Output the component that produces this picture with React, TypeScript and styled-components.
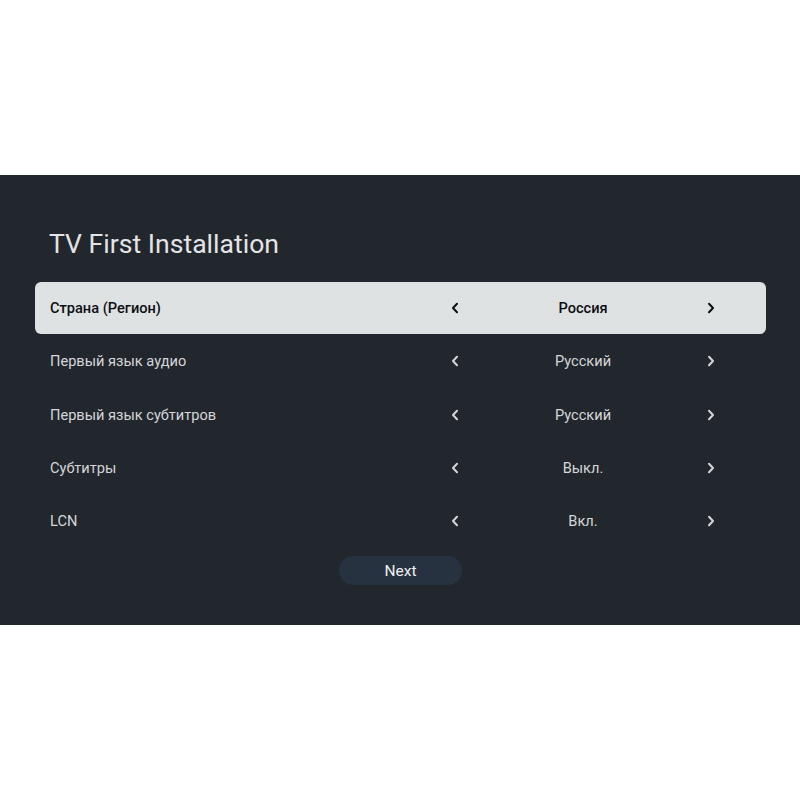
import { createGlobalStyle } from "styled-components";
import styled from "styled-components";

const GlobalStyle = createGlobalStyle`
  html, body {
    margin: 0;
    padding: 0;
    background: #ffffff;
  }
  body {
    font-family: Roboto, "Noto Sans", sans-serif;
  }
`;

const Page = styled.div`
  width: 800px;
  height: 800px;
  display: flex;
  align-items: center;
`;

const Panel = styled.div`
  width: 800px;
  height: 450px;
  box-sizing: border-box;
  background: #22262d;
  padding: 53px 34px 0 35px;
  display: flex;
  flex-direction: column;
`;

const Title = styled.h1`
  margin: 0 0 22px 14px;
  font-size: 26.6px;
  font-weight: 400;
  line-height: 32px;
  color: #e3e4e6;
`;

const List = styled.div`
  display: flex;
  flex-direction: column;
  gap: 1.3px;
`;

const Row = styled.div<{ $active?: boolean }>`
  height: 52px;
  display: grid;
  grid-template-columns: 1fr 40px 216px 40px;
  align-items: center;
  padding: 0 35px 0 15px;
  border-radius: 6px;
  font-size: 14.6px;
  background: ${(p) => (p.$active ? "#dfe2e3" : "transparent")};
  color: ${(p) => (p.$active ? "#0c0f12" : "#d4d6d9")};
  font-weight: ${(p) => (p.$active ? 500 : 400)};
`;

const Label = styled.span``;

const Value = styled.span`
  text-align: center;
`;

const Arrow = styled.span`
  display: flex;
  justify-content: center;
  align-items: center;
`;

const Footer = styled.div`
  display: flex;
  justify-content: center;
  margin-top: 9px;
`;

const NextButton = styled.button`
  width: 123px;
  height: 29px;
  border: none;
  border-radius: 15px;
  background: #273241;
  color: #eef0f2;
  font-family: Roboto, "Noto Sans", sans-serif;
  font-size: 15.5px;
  font-weight: 400;
  padding: 1px 0 0;
`;

const Chevron = ({ dir }: { dir: "left" | "right" }) => (
  <svg width="8" height="12" viewBox="0 0 8 12">
    <path
      d={dir === "left" ? "M6 1.8 L2 6 L6 10.2" : "M2 1.8 L6 6 L2 10.2"}
      fill="none"
      stroke="currentColor"
      strokeWidth="2"
      strokeLinecap="round"
      strokeLinejoin="round"
    />
  </svg>
);

const settings = [
  { label: "Страна (Регион)", value: "Россия" },
  { label: "Первый язык аудио", value: "Русский" },
  { label: "Первый язык субтитров", value: "Русский" },
  { label: "Субтитры", value: "Выкл." },
  { label: "LCN", value: "Вкл." },
];

const App = () => {
  return (
    <Page>
      <GlobalStyle />
      <Panel>
        <Title>TV First Installation</Title>
        <List>
          {settings.map((s, i) => (
            <Row key={s.label} $active={i === 0}>
              <Label>{s.label}</Label>
              <Arrow>
                <Chevron dir="left" />
              </Arrow>
              <Value>{s.value}</Value>
              <Arrow>
                <Chevron dir="right" />
              </Arrow>
            </Row>
          ))}
        </List>
        <Footer>
          <NextButton>Next</NextButton>
        </Footer>
      </Panel>
    </Page>
  );
};

export default App;
